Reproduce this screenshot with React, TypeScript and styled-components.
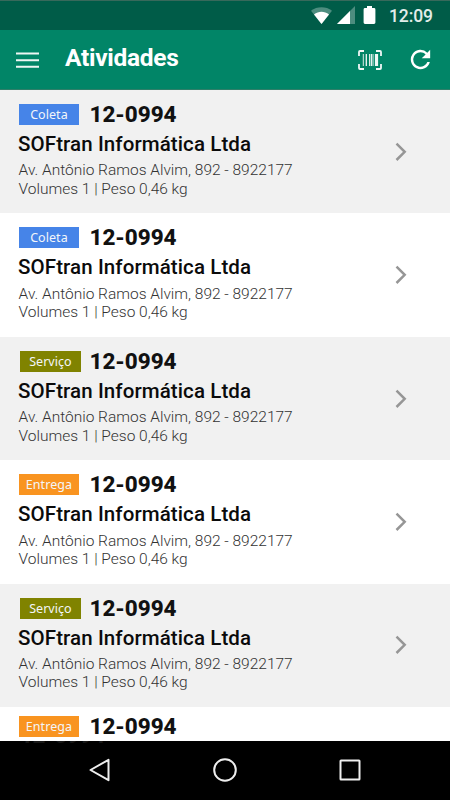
import React from "react";
import styled, { createGlobalStyle } from "styled-components";

const GlobalStyle = createGlobalStyle`
  * { box-sizing: border-box; }
  body { margin: 0; background: #fff; font-family: Roboto, "Liberation Sans", sans-serif; }
`;

const Screen = styled.div`
  width: 450px;
  height: 800px;
  display: flex;
  flex-direction: column;
  overflow: hidden;
  background: #fff;
`;

const StatusBar = styled.header`
  height: 30px;
  flex: none;
  display: flex;
  justify-content: flex-end;
  align-items: center;
  padding: 1px 15px 0 0;
  background: #005c48;
  border-top: 1px solid #38695b;
  color: #fff;
`;

const StatusIcons = styled.svg`
  width: 68px;
  height: 20px;
  margin-right: 10px;
`;

const Clock = styled.time`
  width: 46px;
  font-size: 17.5px;
  font-weight: 500;
  line-height: 28px;
  white-space: nowrap;
  letter-spacing: -0.1px;
  color: #e2edea;
`;

const AppBar = styled.nav`
  height: 60px;
  flex: none;
  display: flex;
  align-items: center;
  padding: 0 15px 0 16px;
  background: #018567;
  border-bottom: 1px solid #2f7f69;
`;

const PageTitle = styled.h1`
  flex: 1;
  margin: 0 0 3px 26px;
  font-size: 24.5px;
  line-height: 30px;
  font-weight: 700;
  letter-spacing: -0.3px;
  color: #fff;
`;

const IconButton = styled.button<{ $gap?: number }>`
  display: flex;
  padding: 0;
  margin: 0 0 0 ${(p) => p.$gap ?? 0}px;
  border: 0;
  background: none;
`;

const List = styled.main`
  height: 651px;
  flex: none;
  overflow: hidden;
`;

const Row = styled.article<{ $shaded: boolean }>`
  height: 123.45px;
  display: flex;
  justify-content: space-between;
  align-items: center;
  padding: 0 43px 0 18px;
  background: ${(p) => (p.$shaded ? "#f1f1f1" : "transparent")};
`;

const PartialRow = styled.article`
  height: 33.75px;
  padding: 5.5px 43px 0 18px;
`;

const Details = styled.div`
  height: 100%;
  padding-top: 11px;
  white-space: nowrap;
`;

const Heading = styled.div`
  display: flex;
  align-items: center;
  height: 27px;
`;

const Badge = styled.span<{ $color: string; $shift: number }>`
  width: 60.5px;
  height: 21px;
  margin-left: ${(p) => 0.7 + p.$shift}px;
  margin-right: ${(p) => 10.3 - p.$shift}px;
  background: ${(p) => p.$color};
  color: #f3f6fa;
  font: 400 12.5px/21px "Noto Sans", sans-serif;
  letter-spacing: 0.05px;
  text-align: center;
`;

const Code = styled.strong`
  height: 27px;
  font-size: 22.5px;
  line-height: 26px;
  font-weight: 800;
  letter-spacing: -0.05px;
  color: #111;
`;

const Company = styled.h2`
  margin: 3px 0 0;
  font-size: 20.5px;
  line-height: 26px;
  font-weight: 500;
  letter-spacing: 0.1px;
  color: #0b0b0b;
`;

const Line = styled.p<{ $gap: number }>`
  margin: ${(p) => p.$gap}px 0 0 0.6px;
  font-size: 15.5px;
  line-height: 18px;
  font-weight: 300;
  letter-spacing: -0.01px;
  color: #333;
`;

const SystemNav = styled.footer`
  position: relative;
  height: 59px;
  flex: none;
  display: flex;
  justify-content: center;
  align-items: center;
  gap: 99px;
  padding-bottom: 1px;
  overflow: hidden;
  background: #000;
`;

const HiddenCode = styled.span`
  position: absolute;
  left: 20px;
  top: -19px;
  font-size: 22.5px;
  line-height: 26px;
  font-weight: 800;
  letter-spacing: -0.4px;
  color: #181818;
`;

const kinds = {
  Coleta: { color: "#4684e8", shift: 0 },
  Serviço: { color: "#808300", shift: 1.5 },
  Entrega: { color: "#f99420", shift: 0 },
};

type Kind = keyof typeof kinds;

const activities: Kind[] = ["Coleta", "Coleta", "Serviço", "Entrega", "Serviço"];

const ActivityHeading = ({ kind }: { kind: Kind }) => (
  <Heading>
    <Badge $color={kinds[kind].color} $shift={kinds[kind].shift}>{kind}</Badge>
    <Code>12-0994</Code>
  </Heading>
);

const Activity = ({ kind, index }: { kind: Kind; index: number }) => (
  <Row $shaded={index % 2 === 0}>
    <Details>
      <ActivityHeading kind={kind} />
      <Company>SOFtran Informática Ltda</Company>
      <Line $gap={4.2}>Av. Antônio Ramos Alvim, 892 - 8922177</Line>
      <Line $gap={0.5}>Volumes 1 | Peso 0,46 kg</Line>
    </Details>
    <svg width="12" height="20" viewBox="0 0 12 20" fill="none" stroke="#969696" strokeWidth="2.5">
      <path d="M1.5 1.600 9.700 9.800 1.500 18" />
    </svg>
  </Row>
);

export default function App() {
  return (
    <>
      <GlobalStyle />
      <Screen>
        <StatusBar>
          <StatusIcons viewBox="0 0 68 20" fill="#fff">
            <path d="M0 4.800C6 .2 15 .2 21 4.800L10.500 18Z" opacity=".3" />
            <path d="M3 8.500C7.500 4.800 13.500 4.800 18 8.500L10.500 18Z" />
            <path d="M44 0V18H26Z" opacity=".3" />
            <path d="M39 5V18H26Z" />
            <path d="M56 0h5v2h2q1.400 0 1.400 1.400v13.200q0 1.400-1.400 1.400h-9q-1.400 0-1.400-1.400V3.400Q52.600 2 54 2h2Z" />
          </StatusIcons>
          <Clock>12:09</Clock>
        </StatusBar>
        <AppBar>
          <IconButton aria-label="Menu">
            <svg width="23" height="18" viewBox="0 0 23 18" stroke="#eef6f3" strokeWidth="2.1">
              <path d="M0 2.500h23M0 9.200h23M0 15.800h23" />
            </svg>
          </IconButton>
          <PageTitle>Atividades</PageTitle>
          <IconButton aria-label="Código de barras">
            <svg width="26" height="22" viewBox="0 0 26 22" fill="none" stroke="#f0f7f5" strokeWidth="1.8">
              <path d="M7 2H3Q2 2 2 3v4M19 2h4q1 0 1 1v4M2 15v4q0 1 1 1h4M24 15v4q0 1-1 1h-4" />
              <path d="M6.300 5v12M12.500 5v12M16 5v12" strokeWidth=".9" />
              <path d="M9.300 5v12M14.300 5v12" strokeWidth="1.300" />
              <path d="M19.500 5v12" strokeWidth="3.200" />
            </svg>
          </IconButton>
          <IconButton aria-label="Atualizar" $gap={23}>
            <svg width="29" height="29" viewBox="0 0 24 24" fill="#fff">
              <path d="M17.650 6.350A8 8 0 1 0 19.730 14h-2.080A6 6 0 1 1 12 6c1.660 0 3.140.690 4.220 1.780L13 11h7V4z" />
            </svg>
          </IconButton>
        </AppBar>
        <List>
          {activities.map((kind, i) => <Activity key={i} kind={kind} index={i} />)}
          <PartialRow>
            <ActivityHeading kind="Entrega" />
          </PartialRow>
        </List>
        <SystemNav>
          <HiddenCode aria-hidden="true">12-0994</HiddenCode>
          <svg width="26" height="26" viewBox="0 0 26 26" fill="none" stroke="#eee" strokeWidth="2">
            <path d="M3.500 13 21.500 2.800v20.400Z" strokeLinejoin="round" />
          </svg>
          <svg width="26" height="26" viewBox="0 0 26 26" fill="none" stroke="#eee" strokeWidth="2">
            <circle cx="13" cy="13" r="10.800" />
          </svg>
          <svg width="26" height="26" viewBox="0 0 26 26" fill="none" stroke="#eee" strokeWidth="2">
            <rect x="3.500" y="3.500" width="19" height="19" rx=".5" />
          </svg>
        </SystemNav>
      </Screen>
    </>
  );
}
